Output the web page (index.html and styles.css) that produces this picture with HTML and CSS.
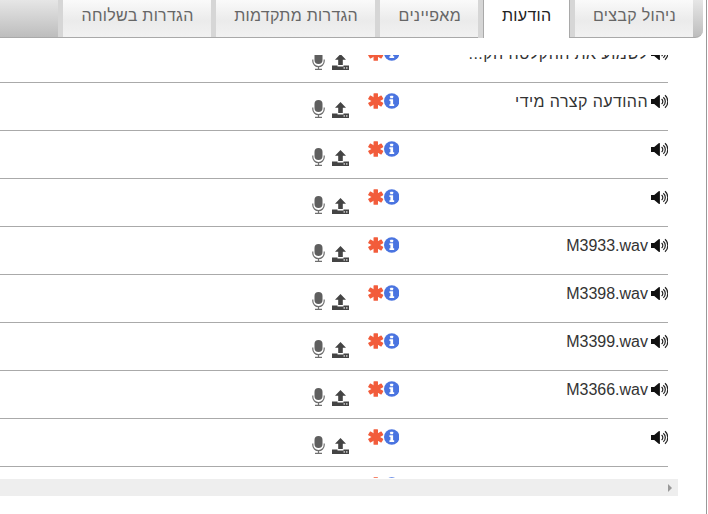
FILE: index.html
```html
<!DOCTYPE html>
<html lang="he" dir="rtl">
<head>
<meta charset="utf-8">
<title>הודעות</title>
<link rel="stylesheet" href="styles.css">
</head>
<body>
<svg class="sprite" width="0" height="0" aria-hidden="true">
  <defs>
    <symbol id="vol" viewBox="0 0 17 15">
      <path d="M0 5h3.200L8 1c.4-.3.9 0 .9.500v12c0 .5-.5.8-.9.5L3.200 10H0z" fill="#111"/>
      <path d="M10.600 5a3.200 3.200 0 0 1 0 5M12.300 3.200a5.600 5.600 0 0 1 0 8.600M14 1.300a8.200 8.200 0 0 1 0 12.400" fill="none" stroke="#222" stroke-width="1.200"/>
    </symbol>
    <symbol id="info" viewBox="0 0 16 16">
      <circle cx="8" cy="8" r="8" fill="#4a74e0"/>
      <rect x="6.400" y="2.600" width="3" height="2.600" rx=".4" fill="#fff"/>
      <path d="M5.600 6.300h3.800v5.100h1.100v1.800H5.600v-1.800h1V8.100h-1z" fill="#fff"/>
    </symbol>
    <symbol id="star" viewBox="0 0 16 16">
      <g fill="#f25c3b">
        <rect x="5.700" y="0" width="4.600" height="16" rx=".6"/>
        <rect x="5.700" y="0" width="4.600" height="16" rx=".6" transform="rotate(60 8 8)"/>
        <rect x="5.700" y="0" width="4.600" height="16" rx=".6" transform="rotate(120 8 8)"/>
      </g>
    </symbol>
    <symbol id="mic" viewBox="0 0 13 18">
      <rect x="2.500" y="0" width="8" height="12" rx="4" fill="#5f5f5f"/>
      <path d="M.8 7.500v1.500a5.700 5.700 0 0 0 11.400 0V7.500M6.500 14.700v2.300M3 17.300h7" fill="none" stroke="#6f6f6f" stroke-width="1.200"/>
    </symbol>
    <symbol id="upl" viewBox="0 0 17 16">
      <path d="M8.500 0L14 5.800H10.800V11H6.200V5.800H3z" fill="#444"/>
      <path d="M0 11.500h5.500v1h6v-1H17V16H0z" fill="#444"/>
      <rect x="11.500" y="13.300" width="1.500" height="1.300" fill="#ddd"/>
      <rect x="14" y="13.300" width="1.500" height="1.300" fill="#ddd"/>
    </symbol>
  </defs>
</svg>
<div class="panel">
  <nav class="tabs">
    <a class="tab">ניהול קבצים</a>
    <a class="tab active">הודעות</a>
    <a class="tab">מאפיינים</a>
    <a class="tab">הגדרות מתקדמות</a>
    <a class="tab">הגדרות בשלוחה</a>
  </nav>
  <div class="viewport">
    <ul class="rows">
      <li class="row"><span class="name"><svg class="vol"><use href="#vol"/></svg>לשמוע את ההקלטה הק...</span><span class="req"><svg class="star"><use href="#star"/></svg><svg class="info"><use href="#info"/></svg></span><span class="acts"><svg class="upl"><use href="#upl"/></svg><svg class="mic"><use href="#mic"/></svg></span></li>
      <li class="row"><span class="name"><svg class="vol"><use href="#vol"/></svg>ההודעה קצרה מידי</span><span class="req"><svg class="star"><use href="#star"/></svg><svg class="info"><use href="#info"/></svg></span><span class="acts"><svg class="upl"><use href="#upl"/></svg><svg class="mic"><use href="#mic"/></svg></span></li>
      <li class="row"><span class="name"><svg class="vol"><use href="#vol"/></svg></span><span class="req"><svg class="star"><use href="#star"/></svg><svg class="info"><use href="#info"/></svg></span><span class="acts"><svg class="upl"><use href="#upl"/></svg><svg class="mic"><use href="#mic"/></svg></span></li>
      <li class="row"><span class="name"><svg class="vol"><use href="#vol"/></svg></span><span class="req"><svg class="star"><use href="#star"/></svg><svg class="info"><use href="#info"/></svg></span><span class="acts"><svg class="upl"><use href="#upl"/></svg><svg class="mic"><use href="#mic"/></svg></span></li>
      <li class="row"><span class="name"><svg class="vol"><use href="#vol"/></svg><bdi class="file">M3933.wav</bdi></span><span class="req"><svg class="star"><use href="#star"/></svg><svg class="info"><use href="#info"/></svg></span><span class="acts"><svg class="upl"><use href="#upl"/></svg><svg class="mic"><use href="#mic"/></svg></span></li>
      <li class="row"><span class="name"><svg class="vol"><use href="#vol"/></svg><bdi class="file">M3398.wav</bdi></span><span class="req"><svg class="star"><use href="#star"/></svg><svg class="info"><use href="#info"/></svg></span><span class="acts"><svg class="upl"><use href="#upl"/></svg><svg class="mic"><use href="#mic"/></svg></span></li>
      <li class="row"><span class="name"><svg class="vol"><use href="#vol"/></svg><bdi class="file">M3399.wav</bdi></span><span class="req"><svg class="star"><use href="#star"/></svg><svg class="info"><use href="#info"/></svg></span><span class="acts"><svg class="upl"><use href="#upl"/></svg><svg class="mic"><use href="#mic"/></svg></span></li>
      <li class="row"><span class="name"><svg class="vol"><use href="#vol"/></svg><bdi class="file">M3366.wav</bdi></span><span class="req"><svg class="star"><use href="#star"/></svg><svg class="info"><use href="#info"/></svg></span><span class="acts"><svg class="upl"><use href="#upl"/></svg><svg class="mic"><use href="#mic"/></svg></span></li>
      <li class="row"><span class="name"><svg class="vol"><use href="#vol"/></svg></span><span class="req"><svg class="star"><use href="#star"/></svg><svg class="info"><use href="#info"/></svg></span><span class="acts"><svg class="upl"><use href="#upl"/></svg><svg class="mic"><use href="#mic"/></svg></span></li>
      <li class="row"><span class="name"><svg class="vol"><use href="#vol"/></svg></span><span class="req"><svg class="star"><use href="#star"/></svg><svg class="info"><use href="#info"/></svg></span><span class="acts"><svg class="upl"><use href="#upl"/></svg><svg class="mic"><use href="#mic"/></svg></span></li>
    </ul>
  </div>
  <div class="scrollbar"><span class="arrow"></span></div>
</div>
</body>
</html>
```
FILE: styles.css
```css
* { box-sizing: border-box; }
html, body { margin: 0; padding: 0; background: #fff; }
body { width: 708px; height: 514px; overflow: hidden; font-family: "Liberation Sans", Arial, sans-serif; font-size: 16px; color: #333; }
.sprite { display: block; height: 0; }
.panel { width: 707px; height: 514px; border-right: 1px solid #999; margin-right: 1px; }
.tabs { display: flex; height: 38px; margin-right: 3px; padding: 0 10px 0 0; border-bottom: 1px solid #a9a9a9; border-radius: 0 0 8px 0; background: linear-gradient(#e6e6e6, #bdbdbd); }
.tab { display: flex; align-items: center; justify-content: center; height: 37px; color: #666; background: linear-gradient(#fafafa, #ebebeb 55%, #f1f1f1); border-left: 5px solid #d6d6d6; padding: 0 17px 6px 18.500px; white-space: nowrap; letter-spacing: .3px; }
.tab.active { color: #222; background: #fff; border-left: 1px solid #a9a9a9; border-right: 1px solid #a9a9a9; height: 38px; margin-left: 5px; box-shadow: -5px 0 0 #d6d6d6; padding-left: 18px; }
.viewport { height: 423px; margin-top: 17px; margin-right: 38px; overflow: hidden; }
.rows { list-style: none; margin: -20px 0 0; padding: 0; }
.row { display: grid; grid-template-columns: 269px 31px 1fr; height: 48px; border-bottom: 1px solid #aaa; }
.name { display: flex; align-items: center; height: 20px; margin-top: 9px; gap: 3px; color: #333; letter-spacing: .42px; white-space: nowrap; }
.file { letter-spacing: 0; }
.vol { width: 17px; height: 15px; flex: none; align-self: flex-start; margin-top: 2px; }
.req { display: flex; flex-direction: row-reverse; justify-content: flex-end; margin-top: 10px; height: 16px; }
.info { width: 16px; height: 16px; order: 1; }
.star { width: 16px; height: 16px; }
.acts { display: flex; align-items: flex-start; gap: 7px; margin-top: 17px; margin-right: 19px; }
.upl { width: 17px; height: 16px; margin-top: 2px; }
.mic { width: 13px; height: 18px; }
.scrollbar { position: relative; height: 17px; width: 678px; margin-top: 1px; margin-right: 28px; background: #eee; }
.arrow { position: absolute; right: 6px; top: 5px; width: 0; height: 0; border-left: 4px solid #999; border-top: 4px solid transparent; border-bottom: 4px solid transparent; }
```
